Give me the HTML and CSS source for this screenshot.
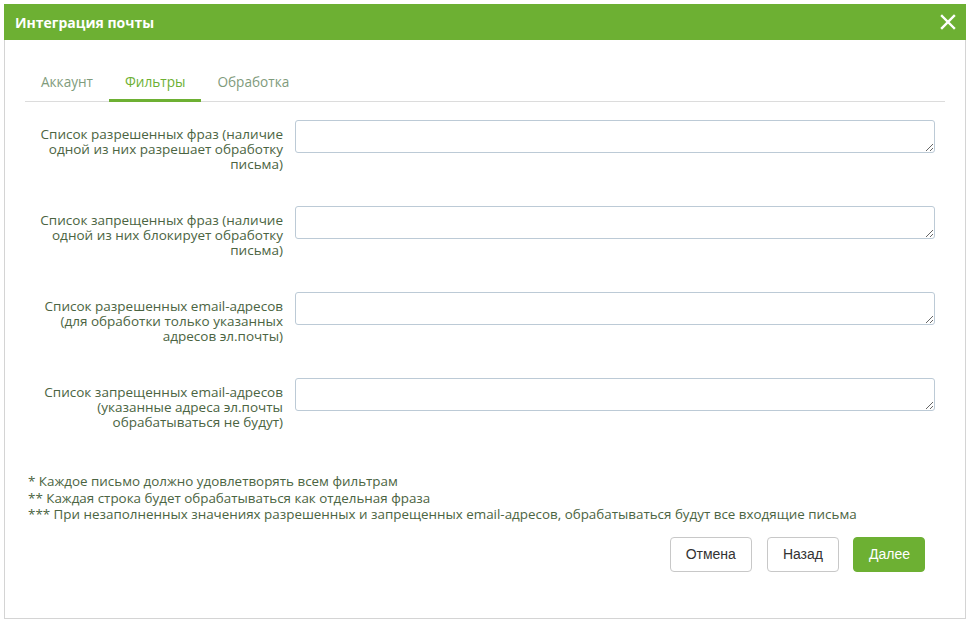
FILE: index.html
```html
<!DOCTYPE html>
<html lang="ru">
<head>
    <meta charset="UTF-8">
    <title>Интеграция почты</title>
    <link rel="stylesheet" href="styles.css">
</head>
<body>

<div class="modal">
    <div class="modal-header">
        <h1>Интеграция почты</h1>
        <span class="close">
            <svg width="16" height="16" viewBox="0 0 16 16"><path d="M2 2L14 14M14 2L2 14" stroke="#fff" stroke-width="2.4" stroke-linecap="square"/></svg>
        </span>
    </div>

    <div class="modal-body">
        <div class="tabs">
            <a class="tab">Аккаунт</a>
            <a class="tab active">Фильтры</a>
            <a class="tab">Обработка</a>
        </div>

        <div class="form">
            <div class="row">
                <label>Список разрешенных фраз (наличие одной из них разрешает обработку письма)</label>
                <textarea></textarea>
            </div>
            <div class="row">
                <label>Список запрещенных фраз (наличие одной из них блокирует обработку письма)</label>
                <textarea></textarea>
            </div>
            <div class="row">
                <label>Список разрешенных email-адресов (для обработки только указанных адресов эл.почты)</label>
                <textarea></textarea>
            </div>
            <div class="row">
                <label>Список запрещенных email-адресов (указанные адреса эл.почты обрабатываться не будут)</label>
                <textarea></textarea>
            </div>
        </div>

        <div class="notes">
            <p>* Каждое письмо должно удовлетворять всем фильтрам</p>
            <p>** Каждая строка будет обрабатываться как отдельная фраза</p>
            <p>*** При незаполненных значениях разрешенных и запрещенных email-адресов, обрабатываться будут все входящие письма</p>
        </div>

        <div class="buttons">
            <button class="btn">Отмена</button>
            <button class="btn">Назад</button>
            <button class="btn btn-primary">Далее</button>
        </div>
    </div>
</div>

</body>
</html>
```

FILE: styles.css
```css
* {
    margin: 0;
    padding: 0;
    box-sizing: border-box;
}

body {
    font-family: 'Open Sans', sans-serif;
    background-color: #fff;
    padding: 4px 4px 0 4px;
    width: 970px;
}

.modal {
    width: 962px;
    height: 615px;
    border: 1px solid #d4d4d4;
    border-top: none;
    background-color: #fff;
}

.modal-header {
    background-color: #6db033;
    height: 36px;
    display: flex;
    align-items: center;
    justify-content: space-between;
    padding: 0 10px 0 11px;
    margin: 0 -1px;
}

.modal-header h1 {
    color: #fff;
    font-size: 14px;
    font-weight: 700;
}

.close {
    display: flex;
    width: 16px;
    height: 16px;
}

.modal-body {
    padding: 24px 20px 0 20px;
}

.tabs {
    display: flex;
    border-bottom: 1px solid #dcdcdc;
    height: 38px;
}

.tab {
    font-size: 13.6px;
    color: #7f9b7c;
    padding: 8px 16px 0 16px;
    height: 38px;
}

.tab.active {
    color: #6db033;
    border-bottom: 3px solid #6db033;
}

.form {
    margin-top: 18px;
    display: flex;
    flex-direction: column;
    gap: 53px;
}

.row {
    display: flex;
    gap: 12px;
}

.row label {
    width: 258px;
    flex-shrink: 0;
    text-align: right;
    font-size: 13.5px;
    line-height: 15px;
    color: #4b6442;
    padding-top: 7px;
    height: 33px;
}

.row textarea {
    width: 640px;
    height: 33px;
    border: 1px solid #bccad6;
    border-radius: 3px;
    resize: vertical;
    font-family: 'Open Sans', sans-serif;
}

.notes {
    margin-top: 62px;
    padding-left: 3px;
}

.notes p {
    font-size: 13.4px;
    line-height: 16.5px;
    color: #4b6442;
}

.buttons {
    display: flex;
    justify-content: flex-end;
    gap: 15px;
    margin-top: 14px;
    padding-right: 20px;
}

.btn {
    font-family: 'Liberation Sans', Arial, sans-serif;
    font-size: 14px;
    color: #333;
    background-color: #fff;
    border: 1px solid #c8c8c8;
    border-radius: 4px;
    height: 35px;
    padding: 0 15px;
}

.btn-primary {
    background-color: #6db033;
    border-color: #6db033;
    color: #fff;
    margin-left: -1px;
    width: 72px;
}
```
